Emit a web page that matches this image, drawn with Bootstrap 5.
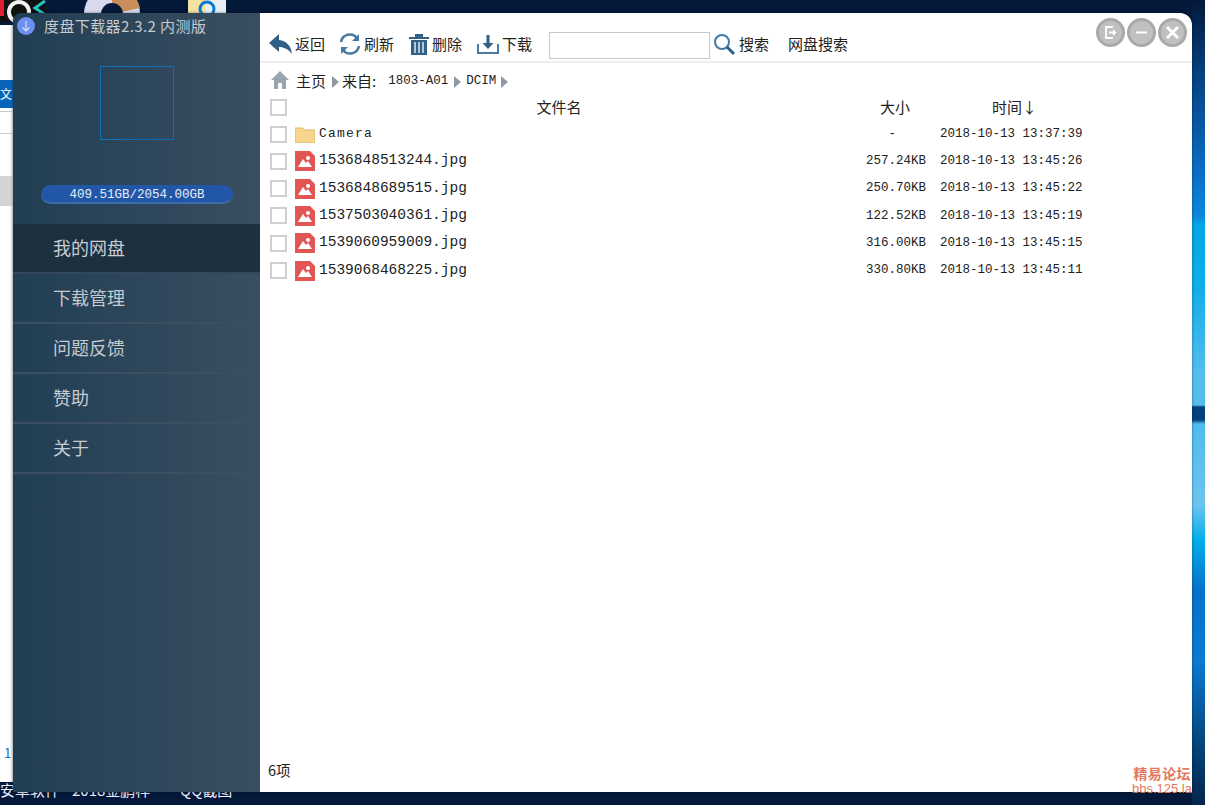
<!doctype html>
<html lang="zh"><head><meta charset="utf-8"><title>度盘下载器</title>
<link rel="stylesheet" href="https://cdn.jsdelivr.net/npm/bootstrap@5.3.0/dist/css/bootstrap.min.css">
<style>
html,body{height:100%;margin:0}
body{position:relative;width:1205px;height:805px;overflow:hidden;background:#04183a;font-family:"Noto Sans CJK SC",sans-serif;font-size:15px;color:#222}
.mono{font-family:"Liberation Mono","Noto Sans CJK SC",monospace;font-size:12.5px}
.bg-right{position:absolute;left:1192px;top:0;width:13px;height:805px;background:linear-gradient(180deg,#04183a 0,#063f7c 70px,#0a6cc4 170px,#0b86dc 215px,#04a6e4 225px,#12aeea 290px,#55bdee 375px,#55bdee 405px,#02407e 407px,#02407e 420px,#4fbcee 424px,#6cc4ee 505px,#04aeea 540px,#0472cc 590px,#0a7ad2 660px,#04477f 740px,#03254c 805px)}
.bg-left{position:absolute;left:0;top:25px;width:14px;height:757px;background:#fff;box-shadow:inset -4px 0 4px -3px #bbb}
.bg-blue{position:absolute;left:0;top:80px;width:14px;height:28px;background:#0864b8;color:#fff;font-size:12px;line-height:28px;overflow:hidden}
.bg-gray{position:absolute;left:0;top:176px;width:14px;height:30px;background:#d4d4d4}
.bg-line{position:absolute;left:0;width:13px;height:1px;background:#ccc}
.bg-num{position:absolute;left:4px;top:743px;color:#1a6cc0;font-size:13px}
.deco{position:absolute}
.desk-text{position:absolute;left:0;top:779px;color:#eef;font-size:15px;white-space:pre;line-height:22px;display:flex}
.app-win{position:absolute;left:13px;top:13px;width:1179px;height:779px;border-radius:8px 12px 0 0;overflow:hidden;box-shadow:0 0 3px rgba(0,0,0,.45)}
.side{width:247px;background:linear-gradient(90deg,#213e53,#3a4e61);color:#c4cbd1;flex:none}
.side-title{height:53px;padding:3px 0 0 4px;gap:9px;font-size:15px;line-height:20px;letter-spacing:.4px}
.title-dot{width:18px;height:18px;border-radius:50%;background:#6d8ff0;flex:none;margin-top:1px}
.avatar-box{width:74px;height:74px;border:1px solid #0e70b6;margin:0 auto}
.cap-bar{width:192px;height:19px;margin:45px 0 0 28px;border-radius:10px;background:#2257a8;border-bottom:2px solid #3b6ba8;color:#e4ecf8;line-height:20px;text-align:center}
.menu-wrap{margin-top:20px}
.menu-row{height:50px;padding-left:40px;font-size:18px;line-height:46px;border-bottom:2px solid #3c4f62}
.menu-row.on{background:#1c3040;color:#c8ced3;border-bottom-color:#33485c}
.main-pane{background:#fff;min-width:0}
.tools{height:50px;border-bottom:2px solid #eee;padding:19px 0 0 9px;font-size:15px;align-items:flex-start}
.tool{gap:3px;line-height:24px;height:24px}
.tool svg{flex:none}
.search-box{width:161px;height:27px;border:1px solid #c8c8c8;margin-top:0}
.win-btns{position:absolute;right:5px;top:5px;gap:2px}
.win-dot{width:29px;height:29px;border-radius:50%;background:#c0c0c0;border:3px solid #a9a9a9}
.crumbs{height:32px;padding:6px 0 0 11px;font-size:15px;line-height:24px}
.tri{width:0;height:0;border-left:7px solid #8f9aa5;border-top:6px solid transparent;border-bottom:6px solid transparent;margin:0 3px 0 6px;align-self:center}
.head-row{height:24px;line-height:24px;font-size:15px;margin-bottom:1.5px}
.file-row{height:27.4px;align-items:center}
.cbx{width:17px;height:17px;border:2px solid #cfcfcf;background:#fff;margin-left:10px;flex:none}
.c-ico{width:20px;margin-left:8px;flex:none;display:flex}
.c-name{width:545px;padding-left:4px;flex:none}
.name-big{font-family:"Liberation Mono",monospace;font-size:14.5px;white-space:pre}
.name-cam{font-family:"Liberation Mono",monospace;font-size:13px;letter-spacing:1.2px}
.c-size{width:66px;text-align:right;flex:none;white-space:pre}
.c-time{padding-left:14px;white-space:pre}
.h-name{width:544px;text-align:center;flex:none}
.foot-count{position:absolute;left:255px;top:746px;font-size:14.5px;color:#222;line-height:22px}
.wm1{position:absolute;right:14px;top:765px;color:#e2795e;font-size:14px;font-weight:700;line-height:16px;letter-spacing:.4px}
.wm2{position:absolute;right:13px;top:781px;color:#e2795e;font-size:13px;font-family:"Liberation Sans",sans-serif;line-height:15px}
</style></head>
<body>
<div class="bg-left"></div>
<div class="bg-blue">文</div><div class="bg-gray"></div>
<div class="bg-line" style="top:111px"></div><div class="bg-line" style="top:133px"></div>
<div class="bg-num">1</div>
<svg class="deco" style="left:0;top:0" width="240" height="22" viewBox="0 0 240 22">
<rect x="0" y="0" width="46" height="22" fill="#111"/><rect x="0" y="0" width="4" height="16" fill="#e02030"/><rect x="0" y="22" width="4" height="2" fill="#fff"/>
<circle cx="19" cy="12" r="10" fill="none" stroke="#f2f2f2" stroke-width="4"/>
<path d="M45 1 35 8l9 6" fill="none" stroke="#1fc6c0" stroke-width="3"/>
<circle cx="112" cy="14" r="28" fill="#d8d8ee"/><path d="M112 14V-14A28 28 0 0 1 140 8Z" fill="#c88d5a"/><circle cx="112" cy="14" r="11" fill="#04183a"/>
<rect x="188" y="0" width="38" height="13" fill="#f4e2a0"/><rect x="205" y="0" width="21" height="13" fill="#e8eef4"/><circle cx="207" cy="9" r="7" fill="none" stroke="#0a78d0" stroke-width="3"/>
</svg>
<div class="desk-text"><span style="width:72px">安卓软件</span><span style="width:108px">2018金鹏样</span><span>QQ截图</span></div>
<div class="bg-right"></div>

<div class="app-win d-flex">
  <aside class="side d-flex flex-column">
    <div class="side-title d-flex">
      <div class="title-dot d-flex align-items-center justify-content-center"><svg width="10" height="11" viewBox="0 0 10 11"><path d="M5 0v10M1.5 6.5 5 10l3.500-3.500" fill="none" stroke="#d6e0ff" stroke-width="1.200"/></svg></div>
      <div>度盘下载器2.3.2 内测版</div>
    </div>
    <div class="avatar-box"></div>
    <div class="cap-bar mono">409.51GB/2054.00GB</div>
    <div class="menu-wrap">
      <div class="menu-row on">我的网盘</div>
      <div class="menu-row">下载管理</div>
      <div class="menu-row">问题反馈</div>
      <div class="menu-row">赞助</div>
      <div class="menu-row">关于</div>
    </div>
  </aside>
  <main class="main-pane flex-grow-1 d-flex flex-column position-relative">
    <div class="tools d-flex">
      <div class="tool d-flex align-items-center" style="margin-right:14px"><svg width="23" height="20" viewBox="0 0 23 20"><path d="M10 0 0 9l10 9v-5c5 0 9 2 13 7-1-8-5-13-13-14Z" fill="#2f6088"/></svg><span>返回</span></div>
      <div class="tool d-flex align-items-center" style="margin-right:15px"><svg width="22" height="22" viewBox="0 0 22 22"><path d="M2 9A9 9 0 0 1 18 5M20 13A9 9 0 0 1 4 17" fill="none" stroke="#4a7aa0" stroke-width="2.500"/><path d="M20 1v7h-7ZM2 21v-7h7Z" fill="#4a7aa0"/></svg><span>刷新</span></div>
      <div class="tool d-flex align-items-center" style="margin-right:15px"><svg width="20" height="21" viewBox="0 0 20 21"><path d="M0 3h20v2H0ZM6 0h8v3H6Z" fill="#2f6088"/><path d="M2 6h16v15H2Z" fill="#2f6088"/><path d="M6 8v11M10 8v11M14 8v11" stroke="#fff" stroke-width="1.300"/></svg><span>删除</span></div>
      <div class="tool d-flex align-items-center" style="margin-right:17px"><svg width="22" height="20" viewBox="0 0 22 20"><path d="M1 10v9h20v-9" fill="none" stroke="#4a7aa0" stroke-width="2"/><path d="M11 1v10" stroke="#2f6088" stroke-width="3"/><path d="M5.500 9h11L11 15Z" fill="#2f6088"/></svg><span>下载</span></div>
      <div class="search-box"></div>
      <div class="tool d-flex align-items-center" style="margin-left:3px;margin-right:19px"><svg width="23" height="22" viewBox="0 0 23 22"><circle cx="9" cy="9" r="7" fill="none" stroke="#3f7ba6" stroke-width="2"/><path d="m14 14 7 7" stroke="#2f6088" stroke-width="3"/></svg><span>搜索</span></div>
      <div class="tool">网盘搜索</div>
    </div>
    <div class="win-btns d-flex">
      <div class="win-dot d-flex align-items-center justify-content-center"><svg width="13" height="13" viewBox="0 0 13 13"><path d="M8 2V1H2v11h6v-1" fill="none" stroke="#fff" stroke-width="1.800"/><path d="M5 5.500h4V3l3.500 3.500L9 10V7.500H5Z" fill="#fff"/></svg></div>
      <div class="win-dot d-flex align-items-center justify-content-center"><svg width="13" height="13" viewBox="0 0 13 13"><path d="M1 6.500h11" stroke="#fff" stroke-width="2.200"/></svg></div>
      <div class="win-dot d-flex align-items-center justify-content-center"><svg width="15" height="15" viewBox="0 0 15 15"><path d="m2 2 11 11M13 2 2 13" stroke="#fff" stroke-width="3"/></svg></div>
    </div>
    <div class="crumbs d-flex">
      <svg width="18" height="18" viewBox="0 0 18 18" style="margin:2px 7px 0 0"><path d="M9 0 0 9h3v9h4v-6h4v6h4V9h3Z" fill="#9aa5b1"/></svg>
      <span>主页</span><i class="tri"></i><span>来自:</span><span class="mono" style="margin-left:12px">1803-A01</span><i class="tri" style="margin-right:5px"></i><span class="mono">DCIM</span><i class="tri" style="margin-left:5px"></i>
    </div>
    <div class="head-row d-flex align-items-center">
      <span class="cbx"></span>
      <span class="h-name">文件名</span>
      <span style="margin-left:49px">大小</span>
      <span style="margin-left:82px">时间↓</span>
    </div>
    <div class="file-row d-flex" style="height:27px"><span class="cbx"></span><span class="c-ico"><svg width="20" height="17" viewBox="0 0 20 17"><path d="M0 2h8l2 2h10v13H0Z" fill="#f7d58c" stroke="#e2b96a"/></svg></span><span class="c-name name-cam">Camera</span><span class="c-size mono">-    </span><span class="c-time mono">2018-10-13 13:37:39</span></div>
    <div class="file-row d-flex"><span class="cbx"></span><span class="c-ico"><svg width="20" height="20" viewBox="0 0 20 20"><use href="#pic"/></svg></span><span class="c-name name-big">1536848513244.jpg</span><span class="c-size mono">257.24KB</span><span class="c-time mono">2018-10-13 13:45:26</span></div>
    <div class="file-row d-flex"><span class="cbx"></span><span class="c-ico"><svg width="20" height="20" viewBox="0 0 20 20"><use href="#pic"/></svg></span><span class="c-name name-big">1536848689515.jpg</span><span class="c-size mono">250.70KB</span><span class="c-time mono">2018-10-13 13:45:22</span></div>
    <div class="file-row d-flex"><span class="cbx"></span><span class="c-ico"><svg width="20" height="20" viewBox="0 0 20 20"><use href="#pic"/></svg></span><span class="c-name name-big">1537503040361.jpg</span><span class="c-size mono">122.52KB</span><span class="c-time mono">2018-10-13 13:45:19</span></div>
    <div class="file-row d-flex"><span class="cbx"></span><span class="c-ico"><svg width="20" height="20" viewBox="0 0 20 20"><use href="#pic"/></svg></span><span class="c-name name-big">1539060959009.jpg</span><span class="c-size mono">316.00KB</span><span class="c-time mono">2018-10-13 13:45:15</span></div>
    <div class="file-row d-flex"><span class="cbx"></span><span class="c-ico"><svg width="20" height="20" viewBox="0 0 20 20"><use href="#pic"/></svg></span><span class="c-name name-big">1539068468225.jpg</span><span class="c-size mono">330.80KB</span><span class="c-time mono">2018-10-13 13:45:11</span></div>
  </main>
  <div class="foot-count">6项</div>
</div>
<div class="wm1">精易论坛</div>
<div class="wm2">bbs.125.la</div>
<svg width="0" height="0" class="position-absolute"><defs><g id="pic"><path d="M0 0h15l5 5v15H0Z" fill="#e25555"/><circle cx="13" cy="7" r="2" fill="#fff"/><path d="M3 16 8 8l3 4 2-2 4 6Z" fill="#fff"/></g></defs></svg>
<script src="https://cdn.jsdelivr.net/npm/bootstrap@5.3.0/dist/js/bootstrap.bundle.min.js"></script>
</body></html>
